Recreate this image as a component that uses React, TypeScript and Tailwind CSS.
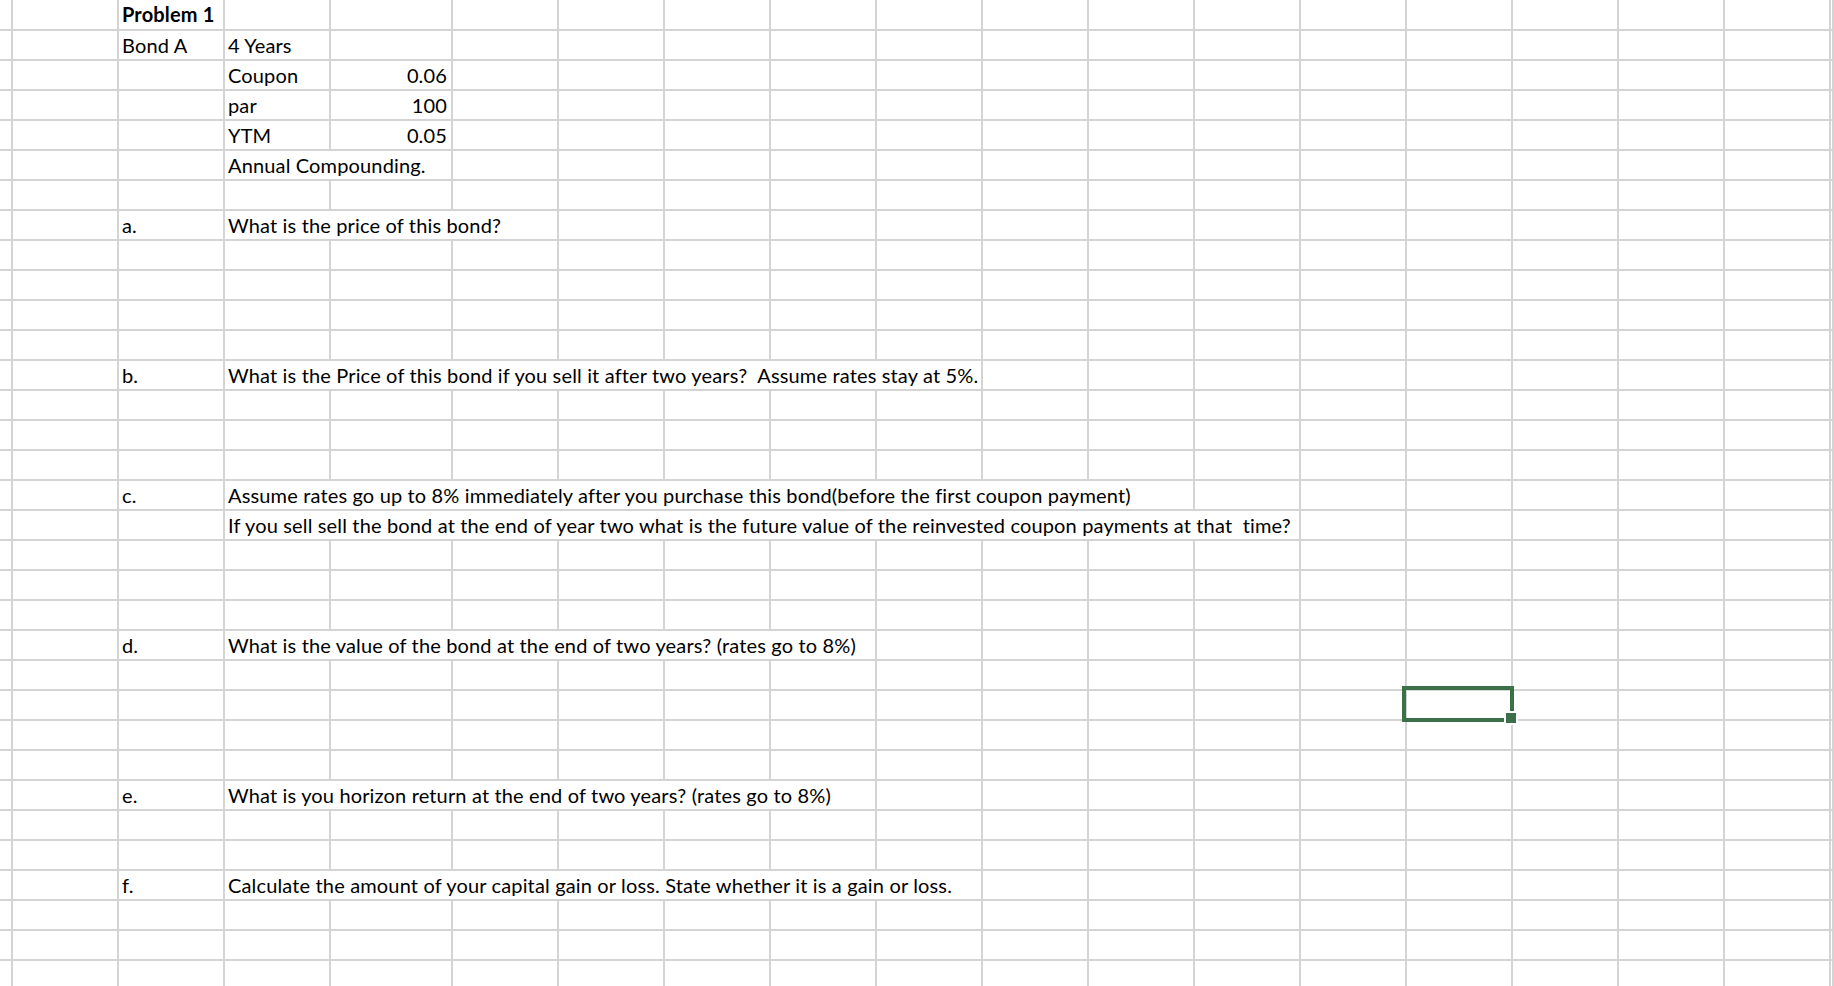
import React from 'react';

type Cell = {
  col: number;
  text: string;
  span?: string;
  width?: number;
  right?: boolean;
  bold?: boolean;
};

// 19 columns: A (narrow), B..D, E (wider), F..R, then the cut-off sliver
const COLS = 'grid-cols-[13px_106px_106px_106px_122px_repeat(13,106px)_1fr]';
const COL_COUNT = 19;
const ROW_COUNT = 33;

const sheet: Record<number, Cell[]> = {
  0: [{ col: 2, text: 'Problem 1', bold: true }],
  1: [
    { col: 2, text: 'Bond A' },
    { col: 3, text: '4 Years' },
  ],
  2: [
    { col: 3, text: 'Coupon' },
    { col: 4, text: '0.06', right: true },
  ],
  3: [
    { col: 3, text: 'par' },
    { col: 4, text: '100', right: true },
  ],
  4: [
    { col: 3, text: 'YTM' },
    { col: 4, text: '0.05', right: true },
  ],
  5: [{ col: 3, text: 'Annual Compounding.', span: 'col-span-2', width: 2 }],
  7: [
    { col: 2, text: 'a.' },
    { col: 3, text: 'What is the price of this bond?', span: 'col-span-3', width: 3 },
  ],
  12: [
    { col: 2, text: 'b.' },
    {
      col: 3,
      text: 'What is the Price of this bond if you sell it after two years?  Assume rates stay at 5%.',
      span: 'col-span-7',
      width: 7,
    },
  ],
  16: [
    { col: 2, text: 'c.' },
    {
      col: 3,
      text: 'Assume rates go up to 8% immediately after you purchase this bond(before the first coupon payment)',
      span: 'col-span-9',
      width: 9,
    },
  ],
  17: [
    {
      col: 3,
      text: 'If you sell sell the bond at the end of year two what is the future value of the reinvested coupon payments at that  time?',
      span: 'col-span-10',
      width: 10,
    },
  ],
  21: [
    { col: 2, text: 'd.' },
    {
      col: 3,
      text: 'What is the value of the bond at the end of two years? (rates go to 8%)',
      span: 'col-span-6',
      width: 6,
    },
  ],
  26: [
    { col: 2, text: 'e.' },
    {
      col: 3,
      text: 'What is you horizon return at the end of two years? (rates go to 8%)',
      span: 'col-span-6',
      width: 6,
    },
  ],
  29: [
    { col: 2, text: 'f.' },
    {
      col: 3,
      text: 'Calculate the amount of your capital gain or loss. State whether it is a gain or loss.',
      span: 'col-span-7',
      width: 7,
    },
  ],
};

const SheetRow: React.FC<{ index: number }> = ({ index }) => {
  const cells = sheet[index] ?? [];
  const out: React.ReactNode[] = [];
  let c = 0;
  while (c < COL_COUNT) {
    const cell = cells.find((x) => x.col === c);
    if (cell) {
      out.push(
        <div
          key={c}
          className={`${cell.span ?? ''} border-r-2 border-b-2 border-[#d4d4d4] whitespace-pre overflow-visible px-[3px] ${
            cell.right ? 'pr-[4px] text-right' : ''
          } ${cell.bold ? 'font-bold' : ''}`}
        >
          {cell.text}
        </div>
      );
      c += cell.width ?? 1;
    } else {
      out.push(<div key={c} className="border-r-2 border-b-2 border-[#d4d4d4]" />);
      c += 1;
    }
  }
  return <div className={`grid ${COLS} ${index === 0 ? 'h-[31px]' : 'h-[30px]'}`}>{out}</div>;
};

export default function App() {
  return (
    <div className="relative h-[986px] w-[1834px] overflow-hidden bg-white font-['Lato','Liberation_Sans',sans-serif] text-[20px] leading-[28px] tracking-[0.15px] text-black">
      {Array.from({ length: ROW_COUNT }, (_, i) => (
        <SheetRow key={i} index={i} />
      ))}

      {/* active cell O24 */}
      <div className="absolute left-[1402px] top-[686px] h-[36px] w-[112px] border-4 border-[#3b7048]" />
      <div className="absolute left-[1504px] top-[711px] h-[14px] w-[14px] bg-white" />
      <div className="absolute left-[1506px] top-[713px] h-[10px] w-[10px] bg-[#3b7048]" />
    </div>
  );
}
